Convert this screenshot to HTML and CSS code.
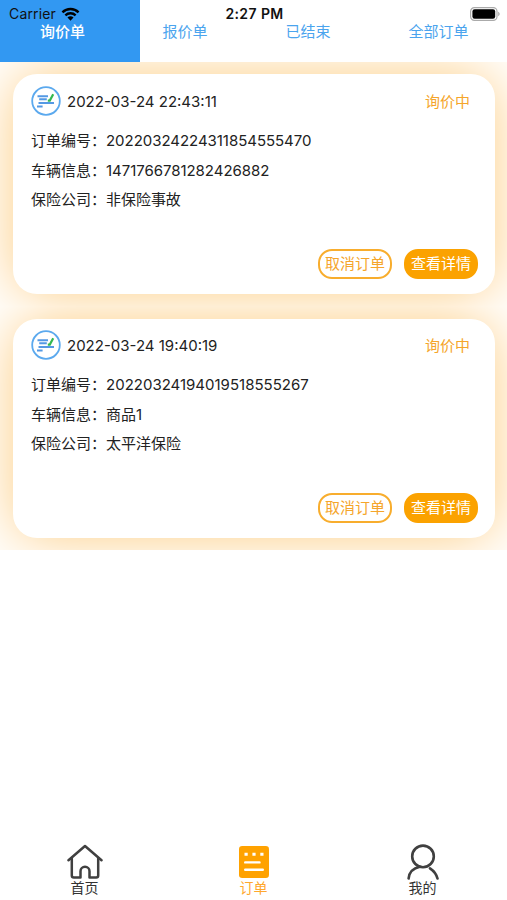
FILE: index.html
```html
<!DOCTYPE html>
<html lang="zh-CN">
<head>
    <meta charset="UTF-8">
    <meta name="viewport" content="width=device-width, initial-scale=1.0">
    <title>订单</title>
    <link rel="stylesheet" href="styles.css">
</head>
<body>
    <!-- Status bar -->
    <div class="status-bar">
        <div class="carrier">
            <span>Carrier</span>
            <svg class="wifi" viewBox="0 0 20 14">
                <path d="M1.5 5.2a12.2 12.2 0 0 1 17 0" fill="none" stroke="#000" stroke-width="2.5"/>
                <path d="M4.6 8.4a7.7 7.7 0 0 1 10.8 0" fill="none" stroke="#000" stroke-width="2.5"/>
                <path d="M10 14L6.8 10.8a4.5 4.5 0 0 1 6.4 0z" fill="#000"/>
            </svg>
        </div>
        <div class="time">2:27 PM</div>
        <div class="power">
            <svg class="battery" viewBox="0 0 30 14">
                <rect x="0.6" y="0.6" width="26.4" height="12.8" rx="3.8" fill="#fff" stroke="#aaa" stroke-width="1.2"/>
                <rect x="2.4" y="2.3" width="22.8" height="9.4" rx="2.2" fill="#000"/>
                <path d="M28.2 4.8c1.9.7 1.9 3.7 0 4.4z" fill="#aaa"/>
            </svg>
        </div>
    </div>

    <nav class="tabs">
        <a class="tab active">询价单</a>
        <a class="tab">报价单</a>
        <a class="tab">已结束</a>
        <a class="tab">全部订单</a>
    </nav>

    <main class="orders">
        <section class="order">
            <div class="card">
                <div class="card-header">
                    <svg class="logo" viewBox="0 0 30 30">
                        <circle cx="15" cy="15" r="13.8" fill="#fff" stroke="#5ba9ee" stroke-width="1.8"/>
                        <path d="M6.5 10.3h10.5M8.2 13.3h7.6M7.5 16.9h15.5M6 20.4h5.6" fill="none" stroke="#5499e4" stroke-width="2"/>
                        <path d="M16.8 14.6h2l3.4-6.4" fill="none" stroke="#35b850" stroke-width="2.2"/>
                    </svg>
                    <span class="date">2022-03-24 22:43:11</span>
                    <span class="state">询价中</span>
                </div>
                <div class="info">
                    <p>订单编号：<span class="value">20220324224311854555470</span></p>
                    <p>车辆信息：<span class="value">1471766781282426882</span></p>
                    <p>保险公司：<span class="value">非保险事故</span></p>
                </div>
                <div class="actions">
                    <button class="btn">取消订单</button>
                    <button class="btn btn-fill">查看详情</button>
                </div>
            </div>
        </section>

        <section class="order">
            <div class="card">
                <div class="card-header">
                    <svg class="logo" viewBox="0 0 30 30">
                        <circle cx="15" cy="15" r="13.8" fill="#fff" stroke="#5ba9ee" stroke-width="1.8"/>
                        <path d="M6.5 10.3h10.5M8.2 13.3h7.6M7.5 16.9h15.5M6 20.4h5.6" fill="none" stroke="#5499e4" stroke-width="2"/>
                        <path d="M16.8 14.6h2l3.4-6.4" fill="none" stroke="#35b850" stroke-width="2.2"/>
                    </svg>
                    <span class="date">2022-03-24 19:40:19</span>
                    <span class="state">询价中</span>
                </div>
                <div class="info">
                    <p>订单编号：<span class="value">20220324194019518555267</span></p>
                    <p>车辆信息：<span class="value">商品1</span></p>
                    <p>保险公司：<span class="value">太平洋保险</span></p>
                </div>
                <div class="actions">
                    <button class="btn">取消订单</button>
                    <button class="btn btn-fill">查看详情</button>
                </div>
            </div>
        </section>
    </main>

    <!-- Bottom navigation -->
    <footer class="tabbar">
        <a class="tabbar-item">
            <svg viewBox="0 0 36 36" fill="none" stroke="#404040" stroke-width="2.5" stroke-linejoin="round" stroke-linecap="round">
                <path d="M1.5 16.2L18 2l16.5 14.2"/>
                <path d="M4.8 14v17.5q0 2 2 2h6.7v-6.2a4.5 4.5 0 0 1 9 0v6.2h6.7q2 0 2-2V14"/>
            </svg>
            <span>首页</span>
        </a>
        <a class="tabbar-item current">
            <svg viewBox="0 0 36 36">
                <rect x="3" y="2" width="30" height="32" rx="3.2" fill="#ffa200"/>
                <path d="M8.5 10.3h3.2M16.4 10.3h3.2M24.3 10.3h3.2" stroke="#fff" stroke-width="3"/>
                <path d="M9.2 18.4h14.3M9.2 25.8h17.6" stroke="#fff" stroke-width="2.4" stroke-linecap="round"/>
            </svg>
            <span>订单</span>
        </a>
        <a class="tabbar-item">
            <svg viewBox="0 0 36 36" fill="none" stroke="#404040" stroke-width="2.6" stroke-linecap="round">
                <circle cx="18" cy="12.4" r="10.8"/>
                <path d="M3.6 34.5C4.2 28.5 8.3 24.2 14.8 22.8M25 24.3q6 4 7.5 10.2"/>
            </svg>
            <span>我的</span>
        </a>
    </footer>
</body>
</html>
```

FILE: styles.css
```css
:root {
    --blue: #3298f2;
    --orange: #fba200;
    --text-color: #222;
}

* {
    margin: 0;
    padding: 0;
    box-sizing: border-box;
}

body {
    font-family: Inter, "Noto Sans CJK SC", sans-serif;
    font-size: 15px;
    color: var(--text-color);
    background: #fff;
    height: 900px;
    display: flex;
    flex-direction: column;
    overflow: hidden;
}

/* Sits over the tabs */
.status-bar {
    position: absolute;
    top: 0;
    left: 0;
    width: 100%;
    height: 27px;
    padding: 0 7px 0 9px;
    display: grid;
    grid-template-columns: 1fr auto 1fr;
    align-items: center;
    color: #111;
    font-size: 14px;
    z-index: 1;
}

.carrier {
    display: flex;
    align-items: center;
    gap: 5px;
    letter-spacing: 0.15px;
}

.wifi {
    width: 19px;
    height: 14px;
}

.time {
    font-weight: 600;
    letter-spacing: 0.4px;
}

.power {
    display: flex;
    justify-content: flex-end;
}

.battery {
    width: 30px;
    height: 14px;
}

.tabs {
    display: flex;
    height: 62px;
    flex-shrink: 0;
}

.tab {
    flex-shrink: 0;
    padding: 21px 39px 0;
    line-height: 22px;
    color: #4ba4ee;
    white-space: nowrap;
}

.tab.active {
    width: 139.5px;
    padding-left: 40px;
    color: #fff;
    font-weight: 500;
    background: var(--blue);
}

.tab.active + .tab {
    padding-left: 23px;
}

.orders {
    flex: 1;
}

.order {
    height: 244px;
    padding: 12px 12px 12px 13px;
    overflow: hidden;
}

.order + .order {
    padding-top: 13px;
}

.card {
    display: flex;
    flex-direction: column;
    height: 100%;
    padding: 12px 17px 15px 18px;
    border-radius: 24px;
    background: #fff;
    box-shadow: 0 0 60px #fdcc80;
}

.order + .order .card {
    padding-top: 11px;
}

.card-header {
    display: flex;
    align-items: center;
    height: 30px;
}

.logo {
    width: 30px;
    height: 30px;
    margin-right: 6px;
}

.state {
    margin-left: auto;
    margin-right: 8px;
    margin-bottom: 2px;
    color: #f5a52b;
}

.info {
    margin-top: 10px;
    line-height: 29.7px;
}

.order:first-child .value {
    letter-spacing: -0.04px;
}

.actions {
    display: flex;
    justify-content: flex-end;
    gap: 12px;
    margin-top: auto;
}

.btn {
    width: 74px;
    height: 30px;
    border: 2px solid #f8ad2d;
    border-radius: 14px;
    background: #fff;
    color: #f5a52b;
    font: inherit;
    line-height: 26px;
    white-space: nowrap;
    display: flex;
    justify-content: center;
}

.btn-fill {
    border-color: var(--orange);
    background: var(--orange);
    color: #fff;
}

.tabbar {
    display: flex;
    height: 58px;
}

.tabbar-item {
    flex: 1;
    display: flex;
    flex-direction: column;
    align-items: center;
    font-size: 14px;
    line-height: 16px;
    color: #333;
}

.tabbar-item svg {
    width: 36px;
    height: 36px;
    margin-top: 2px;
}

.tabbar-item.current {
    color: #ffa82d;
}
```
